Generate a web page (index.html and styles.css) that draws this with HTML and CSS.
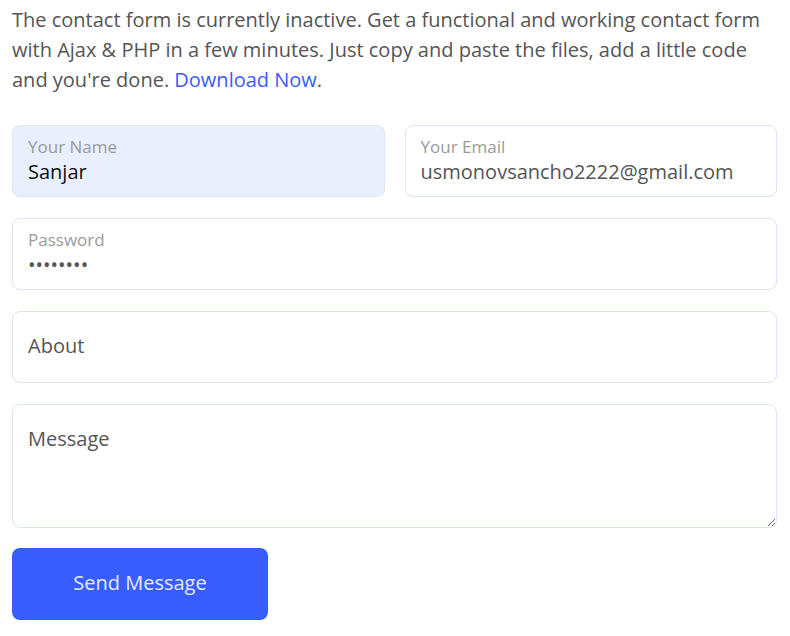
FILE: index.html
```html
<!DOCTYPE html>
<html lang="en">
<head>
<meta charset="utf-8">
<title>Contact</title>
<link rel="stylesheet" href="styles.css">
</head>
<body>
<div class="wrap">
  <p class="intro">The contact form is currently inactive. Get a functional and working contact form with Ajax &amp; PHP in a few minutes. Just copy and paste the files, add a little code and you're done. <a href="#">Download Now</a>.</p>
  <form class="form">
    <div class="row two">
      <label class="field autofill">
        <span class="flabel">Your Name</span>
        <input class="finput dark" type="text" value="Sanjar">
      </label>
      <label class="field">
        <span class="flabel">Your Email</span>
        <input class="finput" type="email" value="usmonovsancho2222@gmail.com">
      </label>
    </div>
    <label class="field">
      <span class="flabel">Password</span>
      <input class="finput pass" type="password" value="12345678">
    </label>
    <div class="field plain">
      <input class="pinput" type="text" placeholder="About">
    </div>
    <textarea class="tarea" placeholder="Message"></textarea>
    <div class="actions">
      <button class="btn" type="button">Send Message</button>
    </div>
  </form>
</div>
</body>
</html>
```
FILE: styles.css
```css
* { box-sizing: border-box; }
body {
  margin: 0;
  background: #fff;
  font-family: "Open Sans", "Liberation Sans", sans-serif;
  color: #555;
}
.wrap {
  padding: 5px 13px 0 12px;
}
.intro {
  margin: 0 0 30px;
  font-size: 20px;
  line-height: 30px;
  color: #555;
}
.intro a {
  color: #3b5bfd;
  text-decoration: none;
}
.form {
  display: flex;
  flex-direction: column;
  gap: 21px;
}
.row.two {
  display: grid;
  grid-template-columns: 1fr 1fr;
  gap: 20px;
}
.field {
  display: flex;
  flex-direction: column;
  justify-content: center;
  gap: 2px;
  height: 72px;
  border: 1px solid #dce4f8;
  border-radius: 8px;
  padding: 0 15px;
  background: #fff;
}
.field.autofill {
  background: #e8f0fe;
}
.field.plain {
  padding-bottom: 3px;
}
.flabel {
  font-size: 17px;
  line-height: 20px;
  color: #9a9a9a;
}
.finput {
  border: 0;
  outline: 0;
  background: transparent;
  padding: 0;
  margin: 0;
  font-family: inherit;
  font-size: 20px;
  line-height: 26px;
  height: 26px;
  color: #555;
  width: 100%;
}
.finput.dark { color: #111; }
.finput.pass {
  color: #555;
}
.pinput {
  border: 0;
  outline: 0;
  background: transparent;
  padding: 0;
  font-family: inherit;
  font-size: 20px;
  color: #555;
  width: 100%;
}
.pinput::placeholder, .tarea::placeholder {
  color: #555;
  opacity: 1;
}
.tarea {
  display: block;
  width: 100%;
  height: 124px;
  border: 1px solid #dce4f8;
  border-radius: 8px;
  padding: 20px 15px;
  font-family: inherit;
  font-size: 20px;
  line-height: 28px;
  color: #555;
  resize: vertical;
  outline: 0;
}
.actions {
  display: flex;
  margin-top: -1px;
}
.btn {
  width: 256px;
  height: 72px;
  border: 0;
  border-radius: 8px;
  padding: 0 0 3px;
  background: #385dff;
  color: #e4eaff;
  font-family: inherit;
  font-size: 20px;
  cursor: pointer;
}
```
